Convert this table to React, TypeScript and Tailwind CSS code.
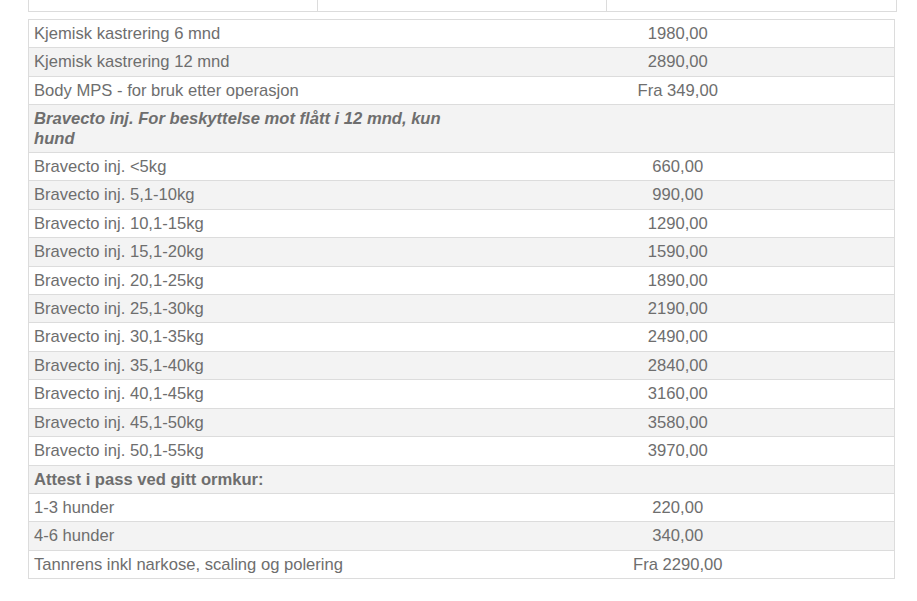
const rows: { name: string; price?: string; head?: 'italic' | 'bold' }[] = [
  { name: 'Kjemisk kastrering 6 mnd', price: '1980,00' },
  { name: 'Kjemisk kastrering 12 mnd', price: '2890,00' },
  { name: 'Body MPS - for bruk etter operasjon', price: 'Fra 349,00' },
  { name: 'Bravecto inj. For beskyttelse mot flått i 12 mnd, kun hund', head: 'italic' },
  { name: 'Bravecto inj. <5kg', price: '660,00' },
  { name: 'Bravecto inj. 5,1-10kg', price: '990,00' },
  { name: 'Bravecto inj. 10,1-15kg', price: '1290,00' },
  { name: 'Bravecto inj. 15,1-20kg', price: '1590,00' },
  { name: 'Bravecto inj. 20,1-25kg', price: '1890,00' },
  { name: 'Bravecto inj. 25,1-30kg', price: '2190,00' },
  { name: 'Bravecto inj. 30,1-35kg', price: '2490,00' },
  { name: 'Bravecto inj. 35,1-40kg', price: '2840,00' },
  { name: 'Bravecto inj. 40,1-45kg', price: '3160,00' },
  { name: 'Bravecto inj. 45,1-50kg', price: '3580,00' },
  { name: 'Bravecto inj. 50,1-55kg', price: '3970,00' },
  { name: 'Attest i pass ved gitt ormkur:', head: 'bold' },
  { name: '1-3 hunder', price: '220,00' },
  { name: '4-6 hunder', price: '340,00' },
  { name: 'Tannrens inkl narkose, scaling og polering', price: 'Fra 2290,00' },
];

export default function App() {
  return (
    <div className="w-[917px] h-[601px] bg-white overflow-hidden font-['Liberation_Sans',Arial,sans-serif] text-[16.6px] text-[#6e6e6e]">
      {/* tail of the table above */}
      <div className="ml-[28px] w-[869px] h-[12px] grid grid-cols-3 border-x border-b border-[#dcdcdc]">
        <div className="border-r border-[#dcdcdc]" />
        <div className="border-r border-[#dcdcdc]" />
        <div />
      </div>

      <table className="ml-[28px] mt-[7px] w-[867px] table-fixed border-collapse border border-[#dcdcdc]">
        <colgroup>
          <col className="w-[433px]" />
          <col />
        </colgroup>
        <tbody>
          {rows.map((r, i) => (
            <tr key={i} className={i % 2 === 1 ? 'bg-[#f3f3f3]' : 'bg-white'}>
              <td
                className={
                  'border-b border-[#dcdcdc] pl-[5px] pr-[12px] py-[4px] leading-[19.4px] align-top ' +
                  (r.head === 'italic' ? 'font-bold italic' : r.head === 'bold' ? 'font-bold' : '')
                }
              >
                {r.name}
              </td>
              <td className="border-b border-[#dcdcdc] py-[4px] leading-[19.4px] text-center align-top">
                {r.price}
              </td>
            </tr>
          ))}
        </tbody>
      </table>
    </div>
  );
}
